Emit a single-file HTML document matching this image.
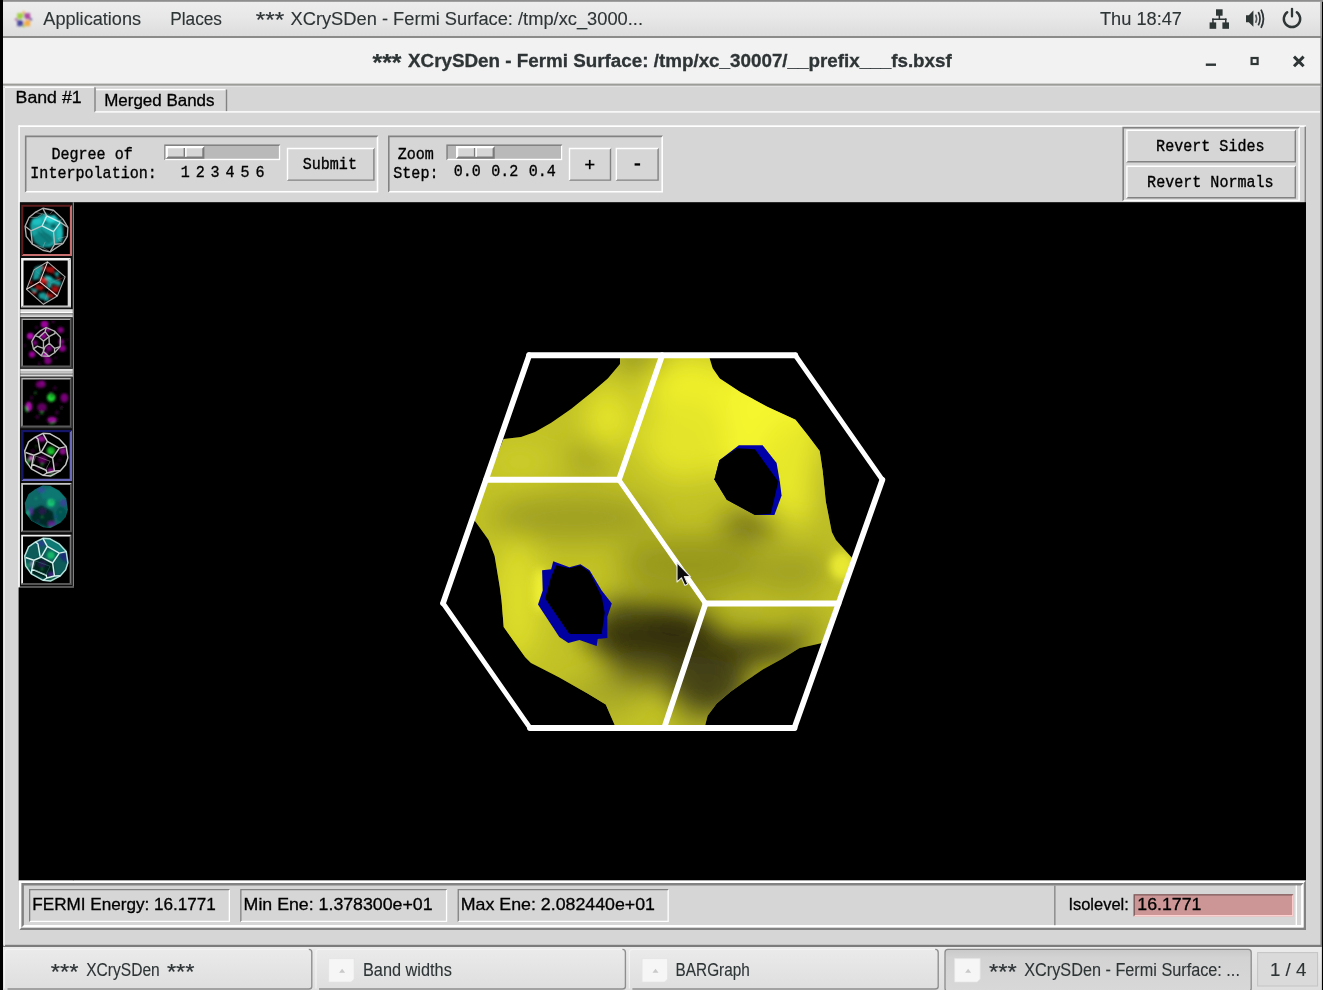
<!DOCTYPE html>
<html><head><meta charset="utf-8"><title>XCrySDen - Fermi Surface</title>
<style>
html,body{margin:0;padding:0;width:1323px;height:990px;overflow:hidden;background:#000}
svg{display:block;font-family:"Liberation Sans",sans-serif}
text{white-space:pre}
</style></head><body>
<svg width="1323" height="990" viewBox="0 0 1323 990">
<defs>
<linearGradient id="gp" x1="0" y1="0" x2="0" y2="1"><stop offset="0" stop-color="#eeeeee"/><stop offset=".45" stop-color="#e8e8e8"/><stop offset="1" stop-color="#dbdbdb"/></linearGradient>
<linearGradient id="gt" x1="0" y1="0" x2="0" y2="1"><stop offset="0" stop-color="#ebebeb"/><stop offset="1" stop-color="#dedede"/></linearGradient>
<linearGradient id="ga" x1="0" y1="0" x2="0" y2="1"><stop offset="0" stop-color="#c9c9c9"/><stop offset=".2" stop-color="#d3d3d3"/><stop offset="1" stop-color="#d8d8d8"/></linearGradient>
<filter id="gb" filterUnits="userSpaceOnUse" x="-10" y="-10" width="1343" height="1010"><feGaussianBlur stdDeviation="0.5"/></filter>
<filter id="b1" x="-20%" y="-20%" width="140%" height="140%"><feGaussianBlur stdDeviation="0.8"/></filter>
<filter id="b2" x="-30%" y="-30%" width="160%" height="160%"><feGaussianBlur stdDeviation="1.2"/></filter>
<filter id="b4" x="-30%" y="-30%" width="160%" height="160%"><feGaussianBlur stdDeviation="4"/></filter>
<filter id="b8" x="-50%" y="-50%" width="200%" height="200%"><feGaussianBlur stdDeviation="9"/></filter>
<filter id="b14" x="-50%" y="-50%" width="200%" height="200%"><feGaussianBlur stdDeviation="14"/></filter>
<filter id="tb" x="-10%" y="-10%" width="120%" height="120%"><feGaussianBlur stdDeviation="20"/></filter>
<filter id="tb2" x="-10%" y="-10%" width="120%" height="120%"><feGaussianBlur stdDeviation="16"/></filter>
<filter id="tb0" x="-10%" y="-10%" width="120%" height="120%"><feGaussianBlur stdDeviation="9"/></filter>
</defs>
<g filter="url(#gb)">
<rect x="-10" y="-10" width="1343" height="1010" fill="#000" />
<rect x="3" y="-10" width="1318.6" height="48" fill="#e9e9e9" />
<rect x="3" y="0" width="1318.6" height="38" fill="url(#gp)" />
<rect x="3" y="-10" width="1330" height="11.8" fill="#8e8e8e" />
<rect x="3" y="36" width="1318.6" height="2" fill="#8b8b89" />
<rect x="3" y="38" width="1318.5" height="46.5" fill="#f2f2f2" />
<rect x="3" y="84" width="1318.5" height="862" fill="#d6d6d6" />
<rect x="3" y="83.6" width="1318.5" height="2.2" fill="#9c9c98" />
<rect x="3" y="85.8" width="1318.5" height="1" fill="#e6e6e6" />
<rect x="1320.4" y="2" width="1.2" height="988" fill="#8a8a8a" />
<rect x="3" y="946.8" width="1318.6" height="60" fill="#dedede" />
<rect x="3" y="946.8" width="1318.6" height="43.2" fill="url(#gt)" />
<rect x="3" y="944.8" width="1318.6" height="2.2" fill="#7c7c7c" />
<g filter="url(#b1)" opacity=".92">
<rect x="17.2" y="13.2" width="6" height="6" fill="#9acd32"/>
<rect x="24.2" y="13.2" width="6" height="6" fill="#a83f9b"/>
<rect x="17.2" y="20.2" width="6" height="6" fill="#3b3b9c"/>
<rect x="24.2" y="20.2" width="6" height="6" fill="#f5a93b"/>
<path d="M23.7,10.5l1.8,2.7h-3.6z" fill="#f5a93b"/>
<path d="M23.7,28l1.8,-2.7h-3.6z" fill="#9acd32"/>
<path d="M14.5,19.4l2.7,-1.8v3.6z" fill="#a83f9b"/>
<path d="M32.6,19.4l-2.7,-1.8v3.6z" fill="#3b3b9c"/>
<rect x="23.1" y="17.5" width="1.3" height="3.8" fill="#eee"/><rect x="21.8" y="18.8" width="3.8" height="1.3" fill="#eee"/>
</g>
<text x="43.3" y="25" font-family="Liberation Sans" font-size="18" font-weight="normal" fill="#2e3436" stroke="#2e3436" stroke-width="0.12" text-anchor="start" textLength="97.8" lengthAdjust="spacingAndGlyphs" >Applications</text>
<text x="170.2" y="25" font-family="Liberation Sans" font-size="18" font-weight="normal" fill="#2e3436" stroke="#2e3436" stroke-width="0.12" text-anchor="start" textLength="51.8" lengthAdjust="spacingAndGlyphs" >Places</text>
<text x="255.7" y="27.3425" font-family="Liberation Sans" font-size="22.5" font-weight="normal" fill="#2e3436" stroke="#2e3436" stroke-width="0.2" text-anchor="start" textLength="28.5" lengthAdjust="spacingAndGlyphs" >***</text>
<text x="290.5" y="25" font-family="Liberation Sans" font-size="18" font-weight="normal" fill="#2e3436" stroke="#2e3436" stroke-width="0.12" text-anchor="start" textLength="352.5" lengthAdjust="spacingAndGlyphs" >XCrySDen - Fermi Surface: /tmp/xc_3000...</text>
<text x="1100" y="25" font-family="Liberation Sans" font-size="18" font-weight="normal" fill="#2e3436" stroke="#2e3436" stroke-width="0.12" text-anchor="start" textLength="82" lengthAdjust="spacingAndGlyphs" >Thu 18:47</text>
<g fill="#2e3436">
<rect x="1216" y="9.3" width="6.6" height="6.4"/>
<rect x="1209.6" y="22.4" width="6.6" height="6.4"/>
<rect x="1222.4" y="22.4" width="6.6" height="6.4"/>
<rect x="1218.6" y="15" width="1.5" height="4.6"/>
<rect x="1212.2" y="18.5" width="14.3" height="1.5"/>
<rect x="1212.2" y="18.5" width="1.5" height="4.5"/>
<rect x="1225" y="18.5" width="1.5" height="4.5"/>
</g>
<path d="M1246,15.2h2.8l4.6,-4.6v16.2l-4.6,-4.6h-2.8z" fill="#2e3436"/>
<path d="M1255.6,14.6q2,4.1 0,8.2" stroke="#2e3436" stroke-width="1.6" fill="none" opacity=".8"/>
<path d="M1258.3,12q3.4,6.7 0,13.4" stroke="#2e3436" stroke-width="1.7" fill="none"/>
<path d="M1261,9.6q4.8,9.1 0,18.2" stroke="#2e3436" stroke-width="1.8" fill="none"/>
<path d="M1287.2,12.2a8.2,8.2 0 1 0 9.6,0" stroke="#2e3436" stroke-width="2.4" fill="none" stroke-linecap="round"/>
<path d="M1292,8.8v7.6" stroke="#2e3436" stroke-width="2.3" stroke-linecap="round"/>
<text x="372.5" y="70.999" font-family="Liberation Sans" font-size="23" font-weight="bold" fill="#2e3436" stroke="#2e3436" stroke-width="0.2" text-anchor="start" textLength="29" lengthAdjust="spacingAndGlyphs" >***</text>
<text x="408" y="66.6" font-family="Liberation Sans" font-size="18" font-weight="bold" fill="#2e3436" stroke="#2e3436" stroke-width="0.3" text-anchor="start" textLength="543.8" lengthAdjust="spacingAndGlyphs" >XCrySDen - Fermi Surface: /tmp/xc_30007/__prefix___fs.bxsf</text>
<rect x="1205.8" y="63.5" width="10.2" height="2.4" fill="#2e3436" />
<rect x="1251.6" y="58" width="6" height="6" fill="none" stroke="#2e3436" stroke-width="2.2"/>
<path d="M1294,56.6l9.6,9.6M1303.6,56.6l-9.6,9.6" stroke="#2e3436" stroke-width="3"/>
<rect x="3.6" y="88" width="1.3" height="858" fill="#efefef" />
<rect x="5" y="86.6" width="89" height="1.3" fill="#ffffff" />
<rect x="94.3" y="87.4" width="1.4" height="24.4" fill="#828282" />
<rect x="96" y="88.9" width="129.5" height="1.4" fill="#ffffff" />
<rect x="225.8" y="89.6" width="1.4" height="22.2" fill="#828282" />
<rect x="95.2" y="111.2" width="1224.8" height="1.4" fill="#ffffff" />
<text x="15.6" y="103.4" font-family="Liberation Sans" font-size="16.5" font-weight="normal" fill="#000" stroke="#000" stroke-width="0.3" text-anchor="start" textLength="66" lengthAdjust="spacingAndGlyphs" >Band #1</text>
<text x="104.2" y="105.6" font-family="Liberation Sans" font-size="16.5" font-weight="normal" fill="#000" stroke="#000" stroke-width="0.3" text-anchor="start" textLength="110.3" lengthAdjust="spacingAndGlyphs" >Merged Bands</text>
<rect x="18.7" y="125.3" width="1287.3" height="1.7" fill="#ffffff" />
<rect x="18.3" y="125.3" width="1.6" height="462.3" fill="#ffffff" />
<rect x="1304.6" y="126.6" width="1.4" height="757.4" fill="#828282" />
<path d="M24.9,192.6H378.3V135.6L376.7,137.2V191H26.5Z" fill="#ffffff"/>
<path d="M24.9,192.6V135.6H378.3L376.7,137.2H26.5V191Z" fill="#828282"/>
<text x="51.4" y="159.4" font-family="Liberation Mono" font-size="16.8" font-weight="normal" fill="#000" stroke="#000" stroke-width="0.35" text-anchor="start" textLength="81.36" lengthAdjust="spacingAndGlyphs" >Degree of</text>
<text x="30.3" y="177.5" font-family="Liberation Mono" font-size="16.8" font-weight="normal" fill="#000" stroke="#000" stroke-width="0.35" text-anchor="start" textLength="126.56" lengthAdjust="spacingAndGlyphs" >Interpolation:</text>
<rect x="164.3" y="144.6" width="116" height="15.6" fill="#b9b9b9" />
<path d="M164.3,160.2H280.3V144.6L278.9,146V158.8H165.7Z" fill="#ffffff"/>
<path d="M164.3,160.2V144.6H280.3L278.9,146H165.7V158.8Z" fill="#828282"/>
<rect x="165.7" y="146" width="38.8" height="12.8" fill="#d6d6d6" />
<path d="M165.7,158.8H204.5V146L202.3,148.2V156.6H167.9Z" fill="#7a7a7a"/>
<path d="M165.7,158.8V146H204.5L202.3,148.2H167.9V156.6Z" fill="#ffffff"/>
<rect x="183.6" y="148" width="1.5" height="8.8" fill="#7a7a7a" />
<rect x="185.1" y="148" width="1.5" height="8.8" fill="#ffffff" />
<text x="185.2" y="176.6" font-family="Liberation Mono" font-size="16.8" font-weight="normal" fill="#000" stroke="#000" stroke-width="0.35" text-anchor="middle" textLength="9.04" lengthAdjust="spacingAndGlyphs" >1</text>
<text x="200.15" y="176.6" font-family="Liberation Mono" font-size="16.8" font-weight="normal" fill="#000" stroke="#000" stroke-width="0.35" text-anchor="middle" textLength="9.04" lengthAdjust="spacingAndGlyphs" >2</text>
<text x="215.1" y="176.6" font-family="Liberation Mono" font-size="16.8" font-weight="normal" fill="#000" stroke="#000" stroke-width="0.35" text-anchor="middle" textLength="9.04" lengthAdjust="spacingAndGlyphs" >3</text>
<text x="230.05" y="176.6" font-family="Liberation Mono" font-size="16.8" font-weight="normal" fill="#000" stroke="#000" stroke-width="0.35" text-anchor="middle" textLength="9.04" lengthAdjust="spacingAndGlyphs" >4</text>
<text x="245" y="176.6" font-family="Liberation Mono" font-size="16.8" font-weight="normal" fill="#000" stroke="#000" stroke-width="0.35" text-anchor="middle" textLength="9.04" lengthAdjust="spacingAndGlyphs" >5</text>
<text x="259.95" y="176.6" font-family="Liberation Mono" font-size="16.8" font-weight="normal" fill="#000" stroke="#000" stroke-width="0.35" text-anchor="middle" textLength="9.04" lengthAdjust="spacingAndGlyphs" >6</text>
<rect x="286.8" y="147.8" width="87.8" height="33" fill="#d6d6d6" />
<path d="M286.8,180.8H374.6V147.8L373.2,149.2V179.4H288.2Z" fill="#828282"/>
<path d="M286.8,180.8V147.8H374.6L373.2,149.2H288.2V179.4Z" fill="#ffffff"/>
<text x="302.7" y="169.2" font-family="Liberation Mono" font-size="16.8" font-weight="normal" fill="#000" stroke="#000" stroke-width="0.35" text-anchor="start" textLength="54.24" lengthAdjust="spacingAndGlyphs" >Submit</text>
<path d="M388,192.6H663V135.6L661.4,137.2V191H389.6Z" fill="#ffffff"/>
<path d="M388,192.6V135.6H663L661.4,137.2H389.6V191Z" fill="#828282"/>
<text x="397.7" y="159.4" font-family="Liberation Mono" font-size="16.8" font-weight="normal" fill="#000" stroke="#000" stroke-width="0.35" text-anchor="start" textLength="36.16" lengthAdjust="spacingAndGlyphs" >Zoom</text>
<text x="393.3" y="177.5" font-family="Liberation Mono" font-size="16.8" font-weight="normal" fill="#000" stroke="#000" stroke-width="0.35" text-anchor="start" textLength="45.2" lengthAdjust="spacingAndGlyphs" >Step:</text>
<rect x="446.4" y="144.6" width="116" height="15.6" fill="#b9b9b9" />
<path d="M446.4,160.2H562.4V144.6L561,146V158.8H447.8Z" fill="#ffffff"/>
<path d="M446.4,160.2V144.6H562.4L561,146H447.8V158.8Z" fill="#828282"/>
<rect x="456" y="146" width="38.8" height="12.8" fill="#d6d6d6" />
<path d="M456,158.8H494.8V146L492.6,148.2V156.6H458.2Z" fill="#7a7a7a"/>
<path d="M456,158.8V146H494.8L492.6,148.2H458.2V156.6Z" fill="#ffffff"/>
<rect x="473.9" y="148" width="1.5" height="8.8" fill="#7a7a7a" />
<rect x="475.4" y="148" width="1.5" height="8.8" fill="#ffffff" />
<text x="467.3" y="176.4" font-family="Liberation Mono" font-size="16.8" font-weight="normal" fill="#000" stroke="#000" stroke-width="0.35" text-anchor="middle" textLength="27.12" lengthAdjust="spacingAndGlyphs" >0.0</text>
<text x="504.8" y="176.4" font-family="Liberation Mono" font-size="16.8" font-weight="normal" fill="#000" stroke="#000" stroke-width="0.35" text-anchor="middle" textLength="27.12" lengthAdjust="spacingAndGlyphs" >0.2</text>
<text x="542.3" y="176.4" font-family="Liberation Mono" font-size="16.8" font-weight="normal" fill="#000" stroke="#000" stroke-width="0.35" text-anchor="middle" textLength="27.12" lengthAdjust="spacingAndGlyphs" >0.4</text>
<rect x="568.8" y="147.8" width="42.4" height="33" fill="#d6d6d6" />
<path d="M568.8,180.8H611.2V147.8L609.8,149.2V179.4H570.2Z" fill="#828282"/>
<path d="M568.8,180.8V147.8H611.2L609.8,149.2H570.2V179.4Z" fill="#ffffff"/>
<rect x="615.6" y="147.8" width="43.2" height="33" fill="#d6d6d6" />
<path d="M615.6,180.8H658.8V147.8L657.4,149.2V179.4H617Z" fill="#828282"/>
<path d="M615.6,180.8V147.8H658.8L657.4,149.2H617V179.4Z" fill="#ffffff"/>
<rect x="585.2" y="163.7" width="9.2" height="1.7" fill="#000" />
<rect x="588.9" y="159.9" width="1.7" height="9.3" fill="#000" />
<rect x="634.6" y="163.3" width="5.5" height="2.3" fill="#000" />
<path d="M1122.4,201.3H1299.9V126.8L1298.3,128.4V199.7H1124Z" fill="#ffffff"/>
<path d="M1122.4,201.3V126.8H1299.9L1298.3,128.4H1124V199.7Z" fill="#828282"/>
<rect x="1126.2" y="129.6" width="169.8" height="32.8" fill="#d6d6d6" />
<path d="M1126.2,162.4H1296V129.6L1294.6,131V161H1127.6Z" fill="#828282"/>
<path d="M1126.2,162.4V129.6H1296L1294.6,131H1127.6V161Z" fill="#ffffff"/>
<rect x="1126.2" y="165.6" width="169.8" height="32.8" fill="#d6d6d6" />
<path d="M1126.2,198.4H1296V165.6L1294.6,167V197H1127.6Z" fill="#828282"/>
<path d="M1126.2,198.4V165.6H1296L1294.6,167H1127.6V197Z" fill="#ffffff"/>
<text x="1156.1" y="150.8" font-family="Liberation Mono" font-size="16.8" font-weight="normal" fill="#000" stroke="#000" stroke-width="0.35" text-anchor="start" textLength="108.48" lengthAdjust="spacingAndGlyphs" >Revert Sides</text>
<text x="1147.1" y="186.8" font-family="Liberation Mono" font-size="16.8" font-weight="normal" fill="#000" stroke="#000" stroke-width="0.35" text-anchor="start" textLength="126.56" lengthAdjust="spacingAndGlyphs" >Revert Normals</text>
<rect x="72.8" y="202.2" width="1233.2" height="678.4" fill="#000" />
<rect x="18.6" y="587.4" width="55.4" height="293.2" fill="#000" />
<rect x="72.8" y="202.2" width="1.2" height="385.2" fill="#808080" />
<rect x="19.9" y="202.2" width="52.9" height="385.2" fill="#0c0c0c" />
<defs>
<clipPath id="tc1" clipPathUnits="userSpaceOnUse"><rect x="79" y="70" width="835" height="844"/></clipPath>
<clipPath id="tc2" clipPathUnits="userSpaceOnUse"><rect x="90" y="72" width="792" height="828"/></clipPath>
<clipPath id="tc3" clipPathUnits="userSpaceOnUse"><rect x="79" y="97" width="839" height="814"/></clipPath>
<clipPath id="tc4" clipPathUnits="userSpaceOnUse"><rect x="79" y="83" width="839" height="828"/></clipPath>
<clipPath id="tc5" clipPathUnits="userSpaceOnUse"><rect x="77" y="77" width="837" height="837"/></clipPath>
<clipPath id="tc6" clipPathUnits="userSpaceOnUse"><rect x="79" y="94" width="832" height="806"/></clipPath>
<clipPath id="tc7" clipPathUnits="userSpaceOnUse"><rect x="79" y="68" width="828" height="832"/></clipPath>
<clipPath id="to"><polygon points="430,95 560,105 720,195 850,335 880,535 840,660 745,770 565,865 435,852 222,735 120,592 104,412 172,250 292,165"/></clipPath>
</defs>
<rect x="21.2" y="204.7" width="50.8" height="51.3" fill="#000" />
<path d="M21.2,256H72V204.7L69.9,206.8V253.9H23.3Z" fill="#c86e6e"/>
<path d="M21.2,256V204.7H72L69.9,206.8H23.3V253.9Z" fill="#5e1e1e"/>
<g transform="translate(19,203) scale(0.05556)" clip-path="url(#tc1)">
<g filter="url(#tb)">
<polygon points="390,215 470,185 560,228 640,205 700,280 785,360 795,560 780,690 650,745 560,795 400,795 290,705 218,560 198,380 260,300" fill="#18a0a0"/>
<ellipse cx="320" cy="330" rx="100" ry="70" fill="#22c8c8" opacity=".8"/>
<ellipse cx="560" cy="290" rx="120" ry="55" fill="#2ee0e0" opacity=".85"/>
<ellipse cx="730" cy="540" rx="50" ry="110" fill="#22c4c4" opacity=".8"/>
<ellipse cx="430" cy="650" rx="180" ry="120" fill="#0f7c7c" opacity=".8"/>
<path d="M330,500L560,720M390,470L610,680" stroke="#0a5a5a" stroke-width="26" opacity=".7"/>
<ellipse cx="620" cy="420" rx="50" ry="40" fill="#0a5050" opacity=".8"/>
<ellipse cx="480" cy="350" rx="45" ry="40" fill="#0d6a6a" opacity=".7"/>
</g>
<g fill="none" stroke="#c2c2c2" stroke-width="24" stroke-linejoin="round" filter="url(#tb0)" opacity=".9">
<polygon points="430,95 620,130 790,290 880,440 870,600 790,730 560,880 430,850 240,740 130,600 110,420 180,260 290,170"/>
<path d="M500,232L745,347L622,515L415,413Z" stroke="#d8f4f4"/>
<path d="M500,232L430,100M745,347L880,440M622,515L640,742L790,730M640,742L560,880M415,413L215,500L110,420M215,500L240,740"/>
<path d="M290,170L420,195L500,232M420,195L330,260L180,260M620,130L560,200M790,290L700,330M240,740L430,800L560,880M430,800L470,700M790,730L700,640L870,600" stroke-width="13" opacity=".6"/>
</g></g>
<rect x="21.1" y="258" width="49.8" height="50" fill="#000" />
<path d="M21.1,308H70.9V258L68.5,260.4V305.6H23.5Z" fill="#d4d4d4"/>
<path d="M21.1,308V258H70.9L68.5,260.4H23.5V305.6Z" fill="#f4f4f4"/>
<rect x="67.7" y="260" width="3.2" height="46.8" fill="#dcdcdc" />
<rect x="21.1" y="306.8" width="49.8" height="1.3" fill="#6a6a6a" />
<g transform="translate(19,256) scale(0.05556)" clip-path="url(#tc2)">
<g filter="url(#tb)">
<polygon points="480,195 645,200 620,315 495,290" fill="#a00a0a"/>
<polygon points="395,375 525,420 485,525 375,482" fill="#a00a0a"/>
<polygon points="305,505 470,560 400,625 295,580" fill="#a00a0a"/>
<polygon points="600,535 725,560 690,665 585,640" fill="#a00a0a"/>
<polygon points="500,655 640,700 600,765 495,722" fill="#a00a0a"/>
<polygon points="238,618 312,648 292,702 238,682" fill="#a00a0a"/>
<polygon points="680,378 752,400 742,432 688,420" fill="#a00a0a"/>
<polygon points="195,440 242,458 225,525 190,510" fill="#a00a0a"/>
<polygon points="400,170 470,190 450,260 395,250" fill="#a00a0a"/>
<polygon points="290,200 430,160 400,300 350,420 250,430 258,300" fill="#169898"/>
<polygon points="450,335 560,370 640,420 760,470 742,545 600,500 560,585 498,560 520,440" fill="#169898"/>
<polygon points="640,298 712,278 722,352 660,372" fill="#169898"/>
<polygon points="350,680 452,648 542,760 520,822 440,782 360,762" fill="#169898"/>
<polygon points="180,558 322,608 330,652 250,640" fill="#169898"/>
<ellipse cx="440" cy="430" rx="50" ry="40" fill="#e03030" opacity=".8"/>
<ellipse cx="530" cy="400" rx="60" ry="40" fill="#30d0d0" opacity=".7"/>
</g>
<g fill="none" stroke="#a8a8a8" stroke-width="20" stroke-linejoin="round" filter="url(#tb0)">
<polygon points="515,105 830,375 690,720 440,870 135,600 270,250"/>
<path d="M375,465L515,105M375,465L135,600M375,465L690,720" stroke="#ecd0d0" stroke-width="20"/>
<path d="M270,250L580,480L830,375M580,480L440,870" stroke-width="10" opacity=".35"/>
</g></g>
<rect x="20.2" y="309.2" width="52.6" height="2.8" fill="#e0e0e0" />
<rect x="20.2" y="312" width="52.6" height="1.3" fill="#fff" />
<rect x="20.2" y="313.3" width="52.6" height="1.8" fill="#a6a6a6" />
<rect x="20.2" y="315.1" width="52.6" height="2.7" fill="#d8d8d8" />
<rect x="20.2" y="368.7" width="52.6" height="2.8" fill="#e0e0e0" />
<rect x="20.2" y="371.5" width="52.6" height="1.3" fill="#fff" />
<rect x="20.2" y="372.8" width="52.6" height="1.8" fill="#a6a6a6" />
<rect x="20.2" y="374.6" width="52.6" height="2.7" fill="#d8d8d8" />
<rect x="20.1" y="317.2" width="52.5" height="51.1" fill="#000" />
<path d="M20.1,368.3H72.6V317.2L71.3,318.5V367H21.4Z" fill="#3c3c3c"/>
<path d="M20.1,368.3V317.2H72.6L71.3,318.5H21.4V367Z" fill="#3c3c3c"/>
<path d="M21.4,367H71.3V318.5L69.9,319.9V365.6H22.8Z" fill="#5a5a5a"/>
<path d="M21.4,367V318.5H71.3L69.9,319.9H22.8V365.6Z" fill="#a4a4a4"/>
<g transform="translate(19,315) scale(0.05556)" clip-path="url(#tc3)">
<g filter="url(#tb2)">
<circle cx="460" cy="165" r="68" fill="#9a009a"/>
<circle cx="750" cy="270" r="55" fill="#800080"/>
<circle cx="205" cy="380" r="62" fill="#b010b0"/>
<circle cx="440" cy="372" r="58" fill="#8a008a"/>
<circle cx="760" cy="480" r="48" fill="#8a008a"/>
<circle cx="782" cy="600" r="62" fill="#8a008a"/>
<circle cx="285" cy="500" r="46" fill="#780078"/>
<circle cx="540" cy="600" r="56" fill="#780078"/>
<circle cx="235" cy="710" r="56" fill="#9a009a"/>
<circle cx="470" cy="712" r="52" fill="#b010b0"/>
<circle cx="520" cy="822" r="66" fill="#7a007a"/>
<circle cx="615" cy="120" r="24" fill="#600060"/>
<circle cx="315" cy="225" r="24" fill="#500050"/>
<circle cx="105" cy="550" r="20" fill="#500050"/>
<circle cx="875" cy="445" r="20" fill="#400040"/>
<circle cx="365" cy="880" r="24" fill="#500050"/>
<circle cx="660" cy="770" r="24" fill="#400040"/>
<circle cx="520" cy="270" r="40" fill="#8a008a"/>
</g>
<g fill="none" stroke="#b4b4b4" stroke-width="24" stroke-linejoin="round" filter="url(#tb0)">
<polygon points="490,225 640,290 745,400 740,570 640,680 540,745 400,735 260,610 230,480 290,370 390,280"/>
<path d="M360,400L440,470L540,390L470,300Z"/>
<path d="M440,470L440,655L400,735M440,655L540,745M540,390L545,510L640,600L740,570M545,510L470,570L440,655M360,400L290,370M260,610L330,560L440,600M470,300L490,225M540,390L650,330L640,290M640,600L640,680"/>
</g></g>
<rect x="20.1" y="376.7" width="52.5" height="51.6" fill="#000" />
<path d="M20.1,428.3H72.6V376.7L71.3,378V427H21.4Z" fill="#3c3c3c"/>
<path d="M20.1,428.3V376.7H72.6L71.3,378H21.4V427Z" fill="#3c3c3c"/>
<path d="M21.3,427H71.3V378L69.9,379.4V425.6H22.7Z" fill="#5a5a5a"/>
<path d="M21.3,427V378H71.3L69.9,379.4H22.7V425.6Z" fill="#b4b4b4"/>
<g transform="translate(19,375) scale(0.05556)" clip-path="url(#tc4)">
<g filter="url(#tb2)">
<ellipse cx="390" cy="170" rx="92" ry="66" fill="#6e006e"/>
<ellipse cx="815" cy="412" rx="70" ry="82" fill="#780078"/>
<ellipse cx="175" cy="570" rx="60" ry="86" fill="#b010b0"/>
<ellipse cx="412" cy="585" rx="86" ry="80" fill="#620062"/>
<ellipse cx="595" cy="808" rx="86" ry="54" fill="#a00aa0"/>
<ellipse cx="645" cy="235" rx="27" ry="27" fill="#500050"/>
<ellipse cx="225" cy="410" rx="27" ry="27" fill="#480048"/>
<ellipse cx="680" cy="675" rx="30" ry="30" fill="#500050"/>
<ellipse cx="330" cy="755" rx="32" ry="32" fill="#480048"/>
<ellipse cx="760" cy="585" rx="24" ry="24" fill="#500050"/>
<ellipse cx="575" cy="312" rx="20" ry="20" fill="#400040"/>
<circle cx="420" cy="140" r="40" fill="#8a008a"/>
<circle cx="580" cy="405" r="76" fill="#20d834"/><circle cx="592" cy="378" r="24" fill="#0c6a14"/>
<ellipse cx="130" cy="612" rx="20" ry="56" fill="#16c428" transform="rotate(-15 130 612)"/>
<circle cx="410" cy="680" r="27" fill="#188a26"/><circle cx="295" cy="320" r="24" fill="#166a1e"/>
<ellipse cx="605" cy="872" rx="62" ry="14" fill="#0e8c12" transform="rotate(-14 605 872)"/>
<circle cx="778" cy="596" r="11" fill="#157a1c"/>
</g></g>
<rect x="21.1" y="430" width="50.9" height="51" fill="#000" />
<path d="M21.1,481H72V430L69.7,432.3V478.7H23.4Z" fill="#6a6abc"/>
<path d="M21.1,481V430H72L69.7,432.3H23.4V478.7Z" fill="#191968"/>
<g transform="translate(19,428) scale(0.05556)" clip-path="url(#tc5)">
<g filter="url(#tb2)">
<ellipse cx="400" cy="195" rx="80" ry="55" fill="#8a0a8a"/>
<ellipse cx="790" cy="420" rx="60" ry="62" fill="#8a0a8a"/>
<ellipse cx="420" cy="570" rx="80" ry="72" fill="#5a005a"/>
<ellipse cx="570" cy="762" rx="62" ry="42" fill="#900a90"/>
<ellipse cx="215" cy="545" rx="40" ry="50" fill="#d070d0"/>
<ellipse cx="245" cy="415" rx="30" ry="30" fill="#400040"/>
<ellipse cx="665" cy="655" rx="25" ry="30" fill="#500050"/>
<ellipse cx="340" cy="735" rx="28" ry="28" fill="#400040"/>
<ellipse cx="735" cy="570" rx="22" ry="22" fill="#500050"/>
<circle cx="575" cy="410" r="72" fill="#1ec830"/><circle cx="590" cy="385" r="22" fill="#0c6a14"/>
<ellipse cx="160" cy="600" rx="26" ry="52" fill="#16a428"/><circle cx="415" cy="660" r="24" fill="#188a26"/><circle cx="305" cy="330" r="18" fill="#166a1e"/>
<ellipse cx="590" cy="835" rx="60" ry="18" fill="#2a9a3a" transform="rotate(-12 590 835)"/>
</g>
<g fill="none" stroke="#c6c6c6" stroke-width="26" stroke-linejoin="round" filter="url(#tb0)">
<polygon points="430,95 560,105 720,195 850,335 880,535 840,660 745,770 565,865 435,852 222,735 120,592 104,412 172,250 292,165"/>
<path d="M430,95L510,240M510,240L725,362L605,540L400,435ZM725,362L850,335M605,540L638,775L745,770M638,775L500,810L435,852M400,435L268,490L120,440M268,490L232,650L222,735M232,650L490,760L500,810M340,190L380,425M340,190L292,165"/>
<path d="M300,505L560,598L482,750L250,650Z" stroke-width="12" opacity=".6"/>
</g></g>
<rect x="21.2" y="483" width="50.6" height="49.2" fill="#000" />
<path d="M21.2,532.2H71.8V483L70,484.8V530.4H23Z" fill="#5c5c5c"/>
<path d="M21.2,532.2V483H71.8L70,484.8H23V530.4Z" fill="#c6c6c6"/>
<g transform="translate(19,480) scale(0.05556)" clip-path="url(#tc6)">
<polygon points="430,95 560,105 720,195 850,335 880,535 840,660 745,770 565,865 435,852 222,735 120,592 104,412 172,250 292,165" fill="#0a6866" filter="url(#tb0)"/>
<g filter="url(#tb2)" clip-path="url(#to)">
<ellipse cx="620" cy="260" rx="230" ry="130" fill="#0c7a76" opacity=".8"/>
<polygon points="400,455 612,572 640,790 500,850 222,738 198,560" fill="#052a28"/>
<ellipse cx="760" cy="620" rx="100" ry="140" fill="#085250" opacity=".8"/>
<circle cx="575" cy="410" r="70" fill="#18c474"/><circle cx="590" cy="385" r="20" fill="#0c7a4a"/>
<ellipse cx="400" cy="180" rx="70" ry="50" fill="#3a4aa6" opacity="0.8"/>
<ellipse cx="800" cy="410" rx="60" ry="62" fill="#4040a0" opacity="0.85"/>
<ellipse cx="212" cy="560" rx="38" ry="70" fill="#5a30a0" opacity="0.9"/>
<ellipse cx="590" cy="788" rx="70" ry="44" fill="#6a22a0" opacity="0.9"/>
<ellipse cx="420" cy="560" rx="70" ry="56" fill="#2a1a50" opacity="0.9"/>
<ellipse cx="150" cy="600" rx="28" ry="50" fill="#10b878" opacity="0.9"/>
<ellipse cx="415" cy="665" rx="22" ry="18" fill="#169040" opacity="0.9"/>
<ellipse cx="305" cy="330" rx="22" ry="22" fill="#10a070" opacity="0.8"/>
<ellipse cx="665" cy="655" rx="24" ry="28" fill="#304098" opacity="0.7"/>
<ellipse cx="345" cy="740" rx="24" ry="24" fill="#2a2a70" opacity="0.7"/>
<ellipse cx="745" cy="578" rx="18" ry="18" fill="#108060" opacity="0.8"/>
<ellipse cx="570" cy="850" rx="40" ry="12" fill="#148a2a" opacity="0.9"/>
</g></g>
<rect x="21.2" y="534.7" width="50.3" height="50.3" fill="#000" />
<path d="M21.2,585H71.5V534.7L69.7,536.5V583.2H23Z" fill="#7a7a7a"/>
<path d="M21.2,585V534.7H71.5L69.7,536.5H23V583.2Z" fill="#f0f0f0"/>
<rect x="21.2" y="583.4" width="50.3" height="1.6" fill="#555" />
<g transform="translate(19,533) scale(0.05556)" clip-path="url(#tc7)">
<polygon points="430,95 560,105 720,195 850,335 880,535 840,660 745,770 565,865 435,852 222,735 120,592 104,412 172,250 292,165" fill="#0a5c5a" filter="url(#tb0)"/>
<g filter="url(#tb2)">
<polygon points="430,95 560,105 720,195 850,335 725,362 510,240" fill="#0e7a74"/>
<polygon points="400,440 610,545 640,770 500,830 222,735 215,510" fill="#04221f"/>
<polygon points="725,362 850,335 880,535 760,470" fill="#1c2a78"/>
<circle cx="575" cy="400" r="70" fill="#14b86a"/>
<ellipse cx="400" cy="190" rx="70" ry="50" fill="#2a3a96" opacity="0.8"/>
<ellipse cx="420" cy="560" rx="70" ry="56" fill="#2a1a56" opacity="0.9"/>
<ellipse cx="575" cy="745" rx="50" ry="36" fill="#4a1a90" opacity="0.9"/>
<ellipse cx="230" cy="560" rx="30" ry="50" fill="#c0b0e8" opacity="0.7"/>
<ellipse cx="150" cy="590" rx="26" ry="50" fill="#10a868" opacity="0.9"/>
<ellipse cx="415" cy="650" rx="22" ry="18" fill="#169040" opacity="0.9"/>
<ellipse cx="590" cy="830" rx="50" ry="14" fill="#3aa04a" opacity="0.9"/>
</g>
<g fill="none" stroke="#b4e2dc" stroke-width="26" stroke-linejoin="round" filter="url(#tb0)">
<polygon points="430,95 560,105 720,195 850,335 880,535 840,660 745,770 565,865 435,852 222,735 120,592 104,412 172,250 292,165"/>
<path d="M430,95L510,240M510,240L725,362L605,540L400,435ZM725,362L850,335M605,540L638,775L745,770M638,775L500,810L435,852M400,435L268,490L120,440M268,490L232,650L222,735M232,650L490,760L500,810M340,190L380,425M340,190L292,165" stroke="#d6f0ec"/>
<path d="M300,505L560,598L482,750L250,650Z" stroke-width="11" stroke="#3a7a72" opacity=".8"/>
</g></g>
<rect x="19.9" y="586.1" width="54.1" height="1.6" fill="#5e5e5e" />
<defs>
<clipPath id="fy"><polygon points="620,355 708.6,355 712.6,368.3 719.7,378.4 740.9,392.5 767.2,406.7 795.5,419.8 807.6,435 819.7,451 822.7,471.3 825.8,501.6 831.8,532 835.9,540 852,558 822,643 817.7,644 799.5,648 781.3,659.2 763.1,669.3 745,681.4 730.8,691.5 716.7,703.6 707.6,715.8 704.5,728 615.9,728 605.8,704.6 587.6,693.5 559.3,677.4 531,663 525,657 510.8,637 503.7,626.9 501.5,600 499.7,586.5 494.6,556 488.6,540 475.5,521.8 472,519 503.5,439 521,437 535,432 551.2,422.8 571.4,408.7 591.6,392.5 607.8,378.4 620,364"/></clipPath>
</defs>
<g clip-path="url(#fy)">
<rect x="440" y="350" width="450" height="385" fill="#c2c227"/>
<g filter="url(#b14)">
<ellipse cx="740" cy="420" rx="80" ry="52" fill="#f6f62e"/>
<ellipse cx="690" cy="390" rx="42" ry="34" fill="#efef2c"/>
<ellipse cx="795" cy="470" rx="35" ry="52" fill="#e8e82c"/>
<ellipse cx="684" cy="440" rx="44" ry="40" fill="#e4e42a"/>
<ellipse cx="608" cy="418" rx="22" ry="30" fill="#e6e62c"/>
<ellipse cx="518" cy="600" rx="22" ry="62" fill="#dede2c"/>
<ellipse cx="520" cy="462" rx="30" ry="14" fill="#cfcf2a"/>
<ellipse cx="575" cy="518" rx="85" ry="24" fill="#a0a022"/>
<ellipse cx="588" cy="458" rx="20" ry="14" fill="#9e9e22"/>
<ellipse cx="640" cy="358" rx="26" ry="9" fill="#7e7e1c"/>
<ellipse cx="690" cy="565" rx="72" ry="30" fill="#98981f"/>
<ellipse cx="790" cy="572" rx="40" ry="24" fill="#a2a224"/>
<ellipse cx="654" cy="634" rx="68" ry="32" fill="#302e0c"/>
<ellipse cx="625" cy="612" rx="24" ry="14" fill="#4a4814"/>
<ellipse cx="642" cy="674" rx="38" ry="14" fill="#6a681c"/>
<ellipse cx="708" cy="682" rx="40" ry="34" fill="#454312"/>
<ellipse cx="752" cy="648" rx="60" ry="15" fill="#3a380f"/>
<ellipse cx="746" cy="615" rx="36" ry="7" fill="#aaaa24"/>
<ellipse cx="598" cy="698" rx="40" ry="20" fill="#aaaa26"/>
<ellipse cx="750" cy="526" rx="30" ry="12" fill="#5e5c18"/>
<ellipse cx="690" cy="722" rx="16" ry="8" fill="#9a9a24"/>
<ellipse cx="824" cy="500" rx="12" ry="55" fill="#b6b626"/>
<ellipse cx="806" cy="626" rx="20" ry="10" fill="#8c8c20"/>
</g>
<g filter="url(#b4)">
<ellipse cx="842" cy="566" rx="12" ry="14" fill="#e8e830"/>
<ellipse cx="540" cy="590" rx="7" ry="22" fill="#efef32"/>
</g>
</g>
<polygon points="738.9,445.2 762.6,445.2 776.6,463 779.8,481.4 781.6,495.6 774.4,515 755,515 726.8,499.8 714.4,479.4 719.4,460.2" fill="#0000a8"/>
<polygon points="736.9,448.2 755,449.2 778.3,481.4 770.8,513.8 755,515 726.8,499.8 714.4,479.4 719.4,460.2" fill="#000"/>
<polygon points="553.2,561.2 569.4,567.3 580.5,564.2 589.6,570.3 601.7,590.5 611.8,603.6 607.4,616.8 607.4,638 597.7,639 596.7,646 579.5,640 568.4,643 559.3,637 538,604.6 542.7,590.5 542.1,570.3 551.2,569.3" fill="#0000a0"/>
<polygon points="556.3,565.3 569.4,568.3 580.5,565.3 589.6,572.3 601.7,596.6 604.7,612.7 601.7,634 569.4,634 545.2,598.6 551.2,576.4" fill="#000"/>
<g fill="none" stroke="#fff" stroke-linecap="round">
<path d="M529.2,355.2L795.2,355.2" stroke-width="6.0"/>
<path d="M530,727.9L794.4,727.9" stroke-width="6.0"/>
<path d="M486.3,479.8L618.9,479.8" stroke-width="6.0"/>
<path d="M705.6,603.5L838.3,603.5" stroke-width="6.0"/>
<path d="M443,603.2L529.2,355.2" stroke-width="5.7"/>
<path d="M882.4,479.8L794.4,727.9" stroke-width="5.7"/>
<path d="M662.2,355.2L618.9,479.8" stroke-width="5.7"/>
<path d="M705.6,603.5L664.2,727.9" stroke-width="5.7"/>
<path d="M795.2,355.2L882.4,479.8" stroke-width="4.9"/>
<path d="M443,603.2L530,727.9" stroke-width="4.9"/>
<path d="M618.9,479.8L705.6,603.5" stroke-width="4.9"/>
</g>
<path d="M677,562.5v19.5l4.4,-4.2l3.4,7.6l3,-1.4l-3.4,-7.4h6z" fill="#111" stroke="#e8e8e8" stroke-width="1.1" stroke-linejoin="round"/>
<path d="M19,930H1306V880.6L1303.55,883.05V927.55H21.45Z" fill="#828282"/>
<path d="M19,930V880.6H1306L1303.55,883.05H21.45V927.55Z" fill="#ffffff"/>
<path d="M21.45,927.55H1303.55V883.05L1301.1,885.5V925.1H23.9Z" fill="#ffffff"/>
<path d="M21.45,927.55V883.05H1303.55L1301.1,885.5H23.9V925.1Z" fill="#828282"/>
<path d="M29,922H230V889L228.7,890.3V920.7H30.3Z" fill="#ffffff"/>
<path d="M29,922V889H230L228.7,890.3H30.3V920.7Z" fill="#828282"/>
<path d="M240.2,922H447.2V889L445.9,890.3V920.7H241.5Z" fill="#ffffff"/>
<path d="M240.2,922V889H447.2L445.9,890.3H241.5V920.7Z" fill="#828282"/>
<path d="M457.6,922H668.8V889L667.5,890.3V920.7H458.9Z" fill="#ffffff"/>
<path d="M457.6,922V889H668.8L667.5,890.3H458.9V920.7Z" fill="#828282"/>
<text x="32.3" y="910.3" font-family="Liberation Sans" font-size="16.2" font-weight="normal" fill="#000" stroke="#000" stroke-width="0.3" text-anchor="start" textLength="183.6" lengthAdjust="spacingAndGlyphs" >FERMI Energy: 16.1771</text>
<text x="243.6" y="910.3" font-family="Liberation Sans" font-size="16.2" font-weight="normal" fill="#000" stroke="#000" stroke-width="0.3" text-anchor="start" textLength="189" lengthAdjust="spacingAndGlyphs" >Min Ene: 1.378300e+01</text>
<text x="460.8" y="910.3" font-family="Liberation Sans" font-size="16.2" font-weight="normal" fill="#000" stroke="#000" stroke-width="0.3" text-anchor="start" textLength="194.2" lengthAdjust="spacingAndGlyphs" >Max Ene: 2.082440e+01</text>
<rect x="1054.2" y="885.6" width="1.3" height="39.6" fill="#828282" />
<rect x="1295.6" y="885.6" width="1.4" height="39.6" fill="#ffffff" />
<text x="1068.4" y="910" font-family="Liberation Sans" font-size="16.2" font-weight="normal" fill="#000" stroke="#000" stroke-width="0.3" text-anchor="start" textLength="60.4" lengthAdjust="spacingAndGlyphs" >Isolevel:</text>
<rect x="1133.6" y="894.2" width="159.8" height="22.2" fill="#cd9696" />
<path d="M1133.6,916.4H1293.4V894.2L1292.1,895.5V915.1H1134.9Z" fill="#ffd0d0"/>
<path d="M1133.6,916.4V894.2H1293.4L1292.1,895.5H1134.9V915.1Z" fill="#7d5c5c"/>
<text x="1137.3" y="910" font-family="Liberation Sans" font-size="16.2" font-weight="normal" fill="#000" stroke="#000" stroke-width="0.3" text-anchor="start" textLength="64.2" lengthAdjust="spacingAndGlyphs" >16.1771</text>
<path d="M4.5,988.5V952.4q0,-3 3,-3H308.8q3,0 3,3V988.5" fill="none" stroke="#f4f4f4" stroke-width="1.2" opacity=".9"/>
<path d="M308.8,949.4q3,0 3,3V986.5q0,2.5 -3,2.5H7.5" fill="none" stroke="#8e8e8e" stroke-width="1.4"/>
<text x="86.2" y="975.6" font-family="Liberation Sans" font-size="17.5" font-weight="normal" fill="#2e3436" stroke="#2e3436" stroke-width="0.12" text-anchor="start" textLength="73.5" lengthAdjust="spacingAndGlyphs" >XCrySDen</text>
<text x="50.8" y="978.63" font-family="Liberation Sans" font-size="21.5" font-weight="normal" fill="#2e3436" stroke="#2e3436" stroke-width="0.2" text-anchor="start" textLength="27.6" lengthAdjust="spacingAndGlyphs" >***</text>
<text x="166.9" y="978.63" font-family="Liberation Sans" font-size="21.5" font-weight="normal" fill="#2e3436" stroke="#2e3436" stroke-width="0.2" text-anchor="start" textLength="27.6" lengthAdjust="spacingAndGlyphs" >***</text>
<path d="M316,988.5V952.4q0,-3 3,-3H622.4q3,0 3,3V988.5" fill="none" stroke="#f4f4f4" stroke-width="1.2" opacity=".9"/>
<path d="M622.4,949.4q3,0 3,3V986.5q0,2.5 -3,2.5H319" fill="none" stroke="#8e8e8e" stroke-width="1.4"/>
<path d="M328.6,958.6h25.6v20.5l-3,3h-22.6z" fill="#f6f6f6" stroke="#e2e2e2" stroke-width=".8"/>
<path d="M339.1,972.8l3,-4l3,4z" fill="#c9c9c9"/>
<text x="363" y="975.6" font-family="Liberation Sans" font-size="17.5" font-weight="normal" fill="#2e3436" stroke="#2e3436" stroke-width="0.12" text-anchor="start" textLength="88.8" lengthAdjust="spacingAndGlyphs" >Band widths</text>
<path d="M629.4,988.5V952.4q0,-3 3,-3H935.2q3,0 3,3V988.5" fill="none" stroke="#f4f4f4" stroke-width="1.2" opacity=".9"/>
<path d="M935.2,949.4q3,0 3,3V986.5q0,2.5 -3,2.5H632.4" fill="none" stroke="#8e8e8e" stroke-width="1.4"/>
<path d="M642.0,958.6h25.6v20.5l-3,3h-22.6z" fill="#f6f6f6" stroke="#e2e2e2" stroke-width=".8"/>
<path d="M652.5,972.8l3,-4l3,4z" fill="#c9c9c9"/>
<text x="675.6" y="975.6" font-family="Liberation Sans" font-size="17.5" font-weight="normal" fill="#2e3436" stroke="#2e3436" stroke-width="0.12" text-anchor="start" textLength="74.2" lengthAdjust="spacingAndGlyphs" >BARGraph</text>
<rect x="945" y="949.4" width="306.20000000000005" height="42.10000000000002" rx="3" fill="url(#ga)" stroke="#8c8c8c" stroke-width="1.3"/>
<path d="M954.6,958.6h25.6v20.5l-3,3h-22.6z" fill="#f6f6f6" stroke="#e2e2e2" stroke-width=".8"/>
<path d="M965.1,972.8l3,-4l3,4z" fill="#c9c9c9"/>
<text x="1024.3" y="975.6" font-family="Liberation Sans" font-size="17.5" font-weight="normal" fill="#2e3436" stroke="#2e3436" stroke-width="0.12" text-anchor="start" textLength="215.6" lengthAdjust="spacingAndGlyphs" >XCrySDen - Fermi Surface: ...</text>
<text x="989" y="978.63" font-family="Liberation Sans" font-size="21.5" font-weight="normal" fill="#2e3436" stroke="#2e3436" stroke-width="0.2" text-anchor="start" textLength="27.7" lengthAdjust="spacingAndGlyphs" >***</text>
<rect x="1257.6" y="952.6" width="60" height="33.4" fill="#dadada" stroke="#c4c4c4" stroke-width="1"/>
<text x="1270" y="975.6" font-family="Liberation Sans" font-size="17.5" font-weight="normal" fill="#2e3436" stroke="#2e3436" stroke-width="0.12" text-anchor="start" textLength="36.4" lengthAdjust="spacingAndGlyphs" >1 / 4</text>
</g>
</svg>
</body></html>
